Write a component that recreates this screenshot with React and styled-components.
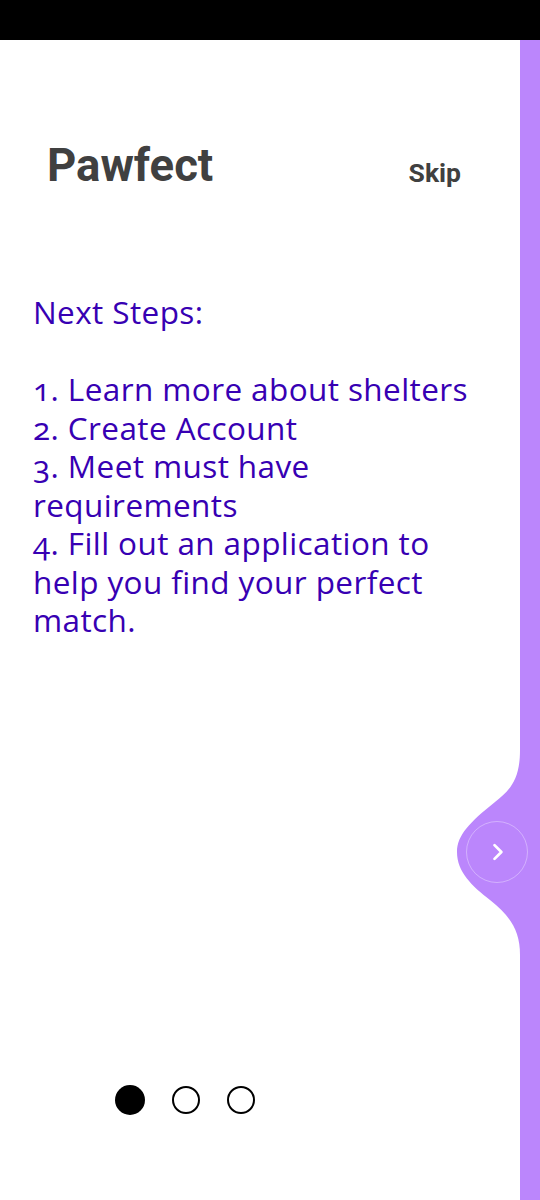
import styled, { createGlobalStyle } from "styled-components";

const GlobalStyle = createGlobalStyle`
	html, body {
		margin: 0;
		padding: 0;
		background: #fff;
	}
	* {
		box-sizing: border-box;
	}
`;

const steps = [
	"1. Learn more about shelters",
	"2. Create Account",
	"3. Meet must have requirements",
	"4. Fill out an application to help you find your perfect match.",
];

export default function App() {
	return (
		<>
			<GlobalStyle />
			<Screen>
				<StatusBar />
				<Body>
					<Main>
						<Header>
							<Logo>Pawfect</Logo>
							<SkipButton>Skip</SkipButton>
						</Header>
						<Content>
							<Title>Next Steps:</Title>
							<StepList>
								{steps.map((s) => (
									<Step key={s}>{s}</Step>
								))}
							</StepList>
						</Content>
						<Dots>
							<Dot $active />
							<Dot />
							<Dot />
						</Dots>
					</Main>
					<Strip />
					{/* liquid swipe bulge */}
					<Wave viewBox="0 0 90 240">
						<path
							d="M70 0 L70 10 C70 40 60 50 45 62 C20 82 7 95 7 112 C7 132 22 146 40 160 C60 176 70 190 70 215 L70 240 L90 240 L90 0 Z"
							fill="#bb86fc"
						/>
					</Wave>
					<NextButton aria-label="next">
						<svg width="20" height="20" viewBox="0 0 16 16" fill="none">
							<path
								d="M6 2.5 L11.5 8 L6 13.5"
								stroke="#fff"
								strokeWidth="2.2"
								strokeLinecap="round"
								strokeLinejoin="round"
							/>
						</svg>
					</NextButton>
				</Body>
			</Screen>
		</>
	);
}

const Screen = styled.div`
	width: 540px;
	height: 1200px;
	display: flex;
	flex-direction: column;
	overflow: hidden;
`;

const StatusBar = styled.div`
	height: 40px;
	background: #000;
	flex-shrink: 0;
`;

const Body = styled.div`
	flex: 1;
	display: flex;
	position: relative;
`;

const Main = styled.div`
	flex: 1;
	display: flex;
	flex-direction: column;
`;

const Header = styled.div`
	display: flex;
	justify-content: space-between;
	align-items: baseline;
	padding: 96px 59px 0 47px;
`;

const Logo = styled.h1`
	margin: 0;
	font-family: Roboto, "Liberation Sans", sans-serif;
	font-weight: 700;
	font-size: 45.5px;
	line-height: 60px;
	color: #404040;
`;

const SkipButton = styled.button`
	border: none;
	background: none;
	padding: 0;
	font-family: Roboto, "Liberation Sans", sans-serif;
	font-weight: 700;
	font-size: 26.5px;
	color: #404040;
	position: relative;
	top: 1px;
`;

const Content = styled.div`
	width: 475px;
	padding: 97px 0 0 33px;
	font-family: "Open Sans", Lato, sans-serif;
	font-weight: 500;
	font-variant-numeric: oldstyle-nums;
	font-size: 31.5px;
	letter-spacing: 0.4px;
	line-height: 38.5px;
	color: #3700b3;
`;

const Title = styled.div`
	margin-bottom: 38.5px;
`;

const StepList = styled.div`
	display: flex;
	flex-direction: column;
`;

const Step = styled.div``;

const Dots = styled.div`
	margin-top: auto;
	margin-bottom: 85px;
	display: flex;
	align-items: center;
	gap: 27px;
	padding-left: 115px;
`;

const Dot = styled.span`
	width: ${(p) => (p.$active ? "30px" : "28px")};
	height: ${(p) => (p.$active ? "30px" : "28px")};
	border-radius: 50%;
	background: ${(p) => (p.$active ? "#000" : "#fff")};
	border: ${(p) => (p.$active ? "none" : "2.5px solid #000")};
`;

const Strip = styled.div`
	width: 20px;
	background: #bb86fc;
	flex-shrink: 0;
`;

const Wave = styled.svg`
	position: absolute;
	top: 700px;
	right: 0;
	width: 90px;
	height: 240px;
`;

const NextButton = styled.button`
	position: absolute;
	left: 466px;
	top: 781px;
	width: 62px;
	height: 62px;
	border-radius: 50%;
	border: 1px solid rgba(255, 255, 255, 0.35);
	background: transparent;
	display: flex;
	align-items: center;
	justify-content: center;
	padding: 0;
`;
